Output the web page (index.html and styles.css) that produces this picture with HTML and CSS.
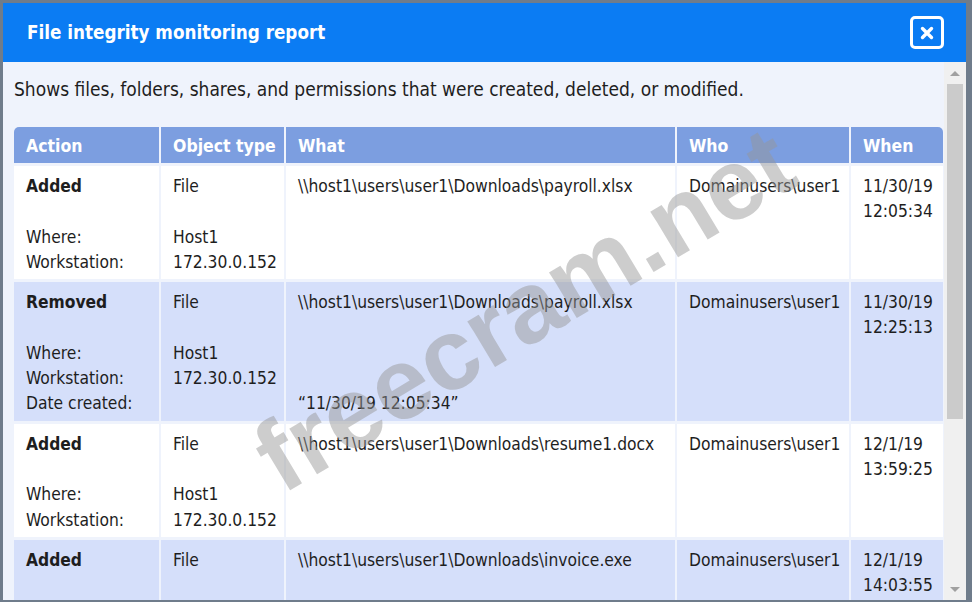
FILE: index.html
```html
<!DOCTYPE html>
<html>
<head>
<meta charset="utf-8">
<link rel="stylesheet" href="styles.css">
</head>
<body>
<div class="frame">
  <div class="window">
    <div class="titlebar">
      <div class="title">File integrity monitoring report</div>
      <div class="close">
        <svg width="14" height="14" viewBox="0 0 14 14"><path d="M2.5 2.5 L11.5 11.5 M11.5 2.5 L2.5 11.5" stroke="#fff" stroke-width="3.4" stroke-linecap="round"/></svg>
      </div>
    </div>
    <div class="content">
      <div class="scroll">
        <p class="desc">Shows files, folders, shares, and permissions that were created, deleted, or modified.</p>
        <div class="grid">
          <div class="row head">
            <div class="cell first">Action</div>
            <div class="cell">Object type</div>
            <div class="cell">What</div>
            <div class="cell">Who</div>
            <div class="cell last">When</div>
          </div>
          <div class="row">
            <div class="cell"><b>Added</b><br><br>Where:<br>Workstation:</div>
            <div class="cell">File<br><br>Host1<br>172.30.0.152</div>
            <div class="cell">\\host1\users\user1\Downloads\payroll.xlsx</div>
            <div class="cell">Domainusers\user1</div>
            <div class="cell">11/30/19<br>12:05:34</div>
          </div>
          <div class="row alt">
            <div class="cell"><b>Removed</b><br><br>Where:<br>Workstation:<br>Date created:</div>
            <div class="cell">File<br><br>Host1<br>172.30.0.152</div>
            <div class="cell">\\host1\users\user1\Downloads\payroll.xlsx<br><br><br><br>“11/30/19 12:05:34”</div>
            <div class="cell">Domainusers\user1</div>
            <div class="cell">11/30/19<br>12:25:13</div>
          </div>
          <div class="row">
            <div class="cell"><b>Added</b><br><br>Where:<br>Workstation:</div>
            <div class="cell">File<br><br>Host1<br>172.30.0.152</div>
            <div class="cell">\\host1\users\user1\Downloads\resume1.docx</div>
            <div class="cell">Domainusers\user1</div>
            <div class="cell">12/1/19<br>13:59:25</div>
          </div>
          <div class="row alt">
            <div class="cell"><b>Added</b><br><br>Where:<br>Workstation:</div>
            <div class="cell">File<br><br>Host1<br>172.30.0.152</div>
            <div class="cell">\\host1\users\user1\Downloads\invoice.exe</div>
            <div class="cell">Domainusers\user1</div>
            <div class="cell">12/1/19<br>14:03:55</div>
          </div>
        </div>
      </div>
      <div class="scrollbar">
        <div class="arrow up"></div>
        <div class="track"><div class="thumb"></div></div>
        <div class="arrow down"></div>
      </div>
    </div>
    <div class="watermark">freecram.net</div>
  </div>
</div>
</body>
</html>
```

FILE: styles.css
```css
* { box-sizing: border-box; }
html, body {
  margin: 0;
  padding: 0;
  width: 972px;
  height: 602px;
  overflow: hidden;
}
body {
  background: #6f7c8b;
  font-family: "DejaVu Sans Condensed", "DejaVu Sans", sans-serif;
  color: #1e1e1e;
}
.frame {
  padding: 3px 3px 2px 3px;
  height: 602px;
}
.window {
  position: relative;
  width: 963px;
  height: 597px;
  display: flex;
  flex-direction: column;
  background: #eff3fc;
  overflow: hidden;
}
.titlebar {
  height: 59px;
  flex: none;
  background: #0b7cf3;
  display: flex;
  align-items: center;
  justify-content: space-between;
  padding: 0 22px 0 24px;
}
.title {
  color: #fff;
  font-weight: bold;
  font-size: 18.7px;
}
.close {
  width: 34px;
  height: 33px;
  border: 3px solid #fff;
  border-radius: 5px;
  display: flex;
  align-items: center;
  justify-content: center;
}
.content {
  flex: 1;
  display: flex;
  min-height: 0;
}
.scroll {
  flex: 1;
  overflow: hidden;
  padding: 14px 0 0 11px;
}
.desc {
  margin: 0 0 25px 0;
  font-size: 19px;
  line-height: 26px;
}
.grid {
  display: grid;
  grid-template-columns: 145px 123px 389px 172px 92px;
  column-gap: 2px;
  row-gap: 3px;
  width: 929px;
}
.row { display: contents; }
.cell {
  background: #ffffff;
  font-size: 17.3px;
  line-height: 25.3px;
  padding: 8px 6px 4px 12px;
  white-space: nowrap;
}
.alt .cell { background: #d5dffa; }
.head .cell {
  background: #7c9ee0;
  color: #fff;
  font-weight: bold;
  font-size: 17.5px;
  height: 36px;
  padding: 3px 6px 0 12px;
  display: flex;
  align-items: center;
}
.head .first { border-top-left-radius: 5px; }
.head .last { border-top-right-radius: 5px; }
.cell b { font-weight: bold; }
.scrollbar {
  width: 22px;
  flex: none;
  background: #f0f0f0;
  display: flex;
  flex-direction: column;
  align-items: center;
}
.arrow {
  width: 0;
  height: 0;
  border-left: 5px solid transparent;
  border-right: 5px solid transparent;
}
.arrow.up {
  border-bottom: 5px solid #a0a0a0;
  margin: 9px 0 8px;
}
.arrow.down {
  border-top: 5px solid #a0a0a0;
  margin: 0 0 8px;
}
.track {
  flex: 1;
  width: 16px;
}
.thumb {
  height: 335px;
  background: #cbcbcb;
}
.watermark {
  position: absolute;
  left: 218px;
  top: 256px;
  font-family: "Liberation Sans", Arial, sans-serif;
  font-weight: bold;
  font-size: 101px;
  line-height: 1;
  color: rgba(150, 150, 150, 0.48);
  transform: rotate(-31deg);
  transform-origin: center;
  white-space: nowrap;
  pointer-events: none;
}
```
